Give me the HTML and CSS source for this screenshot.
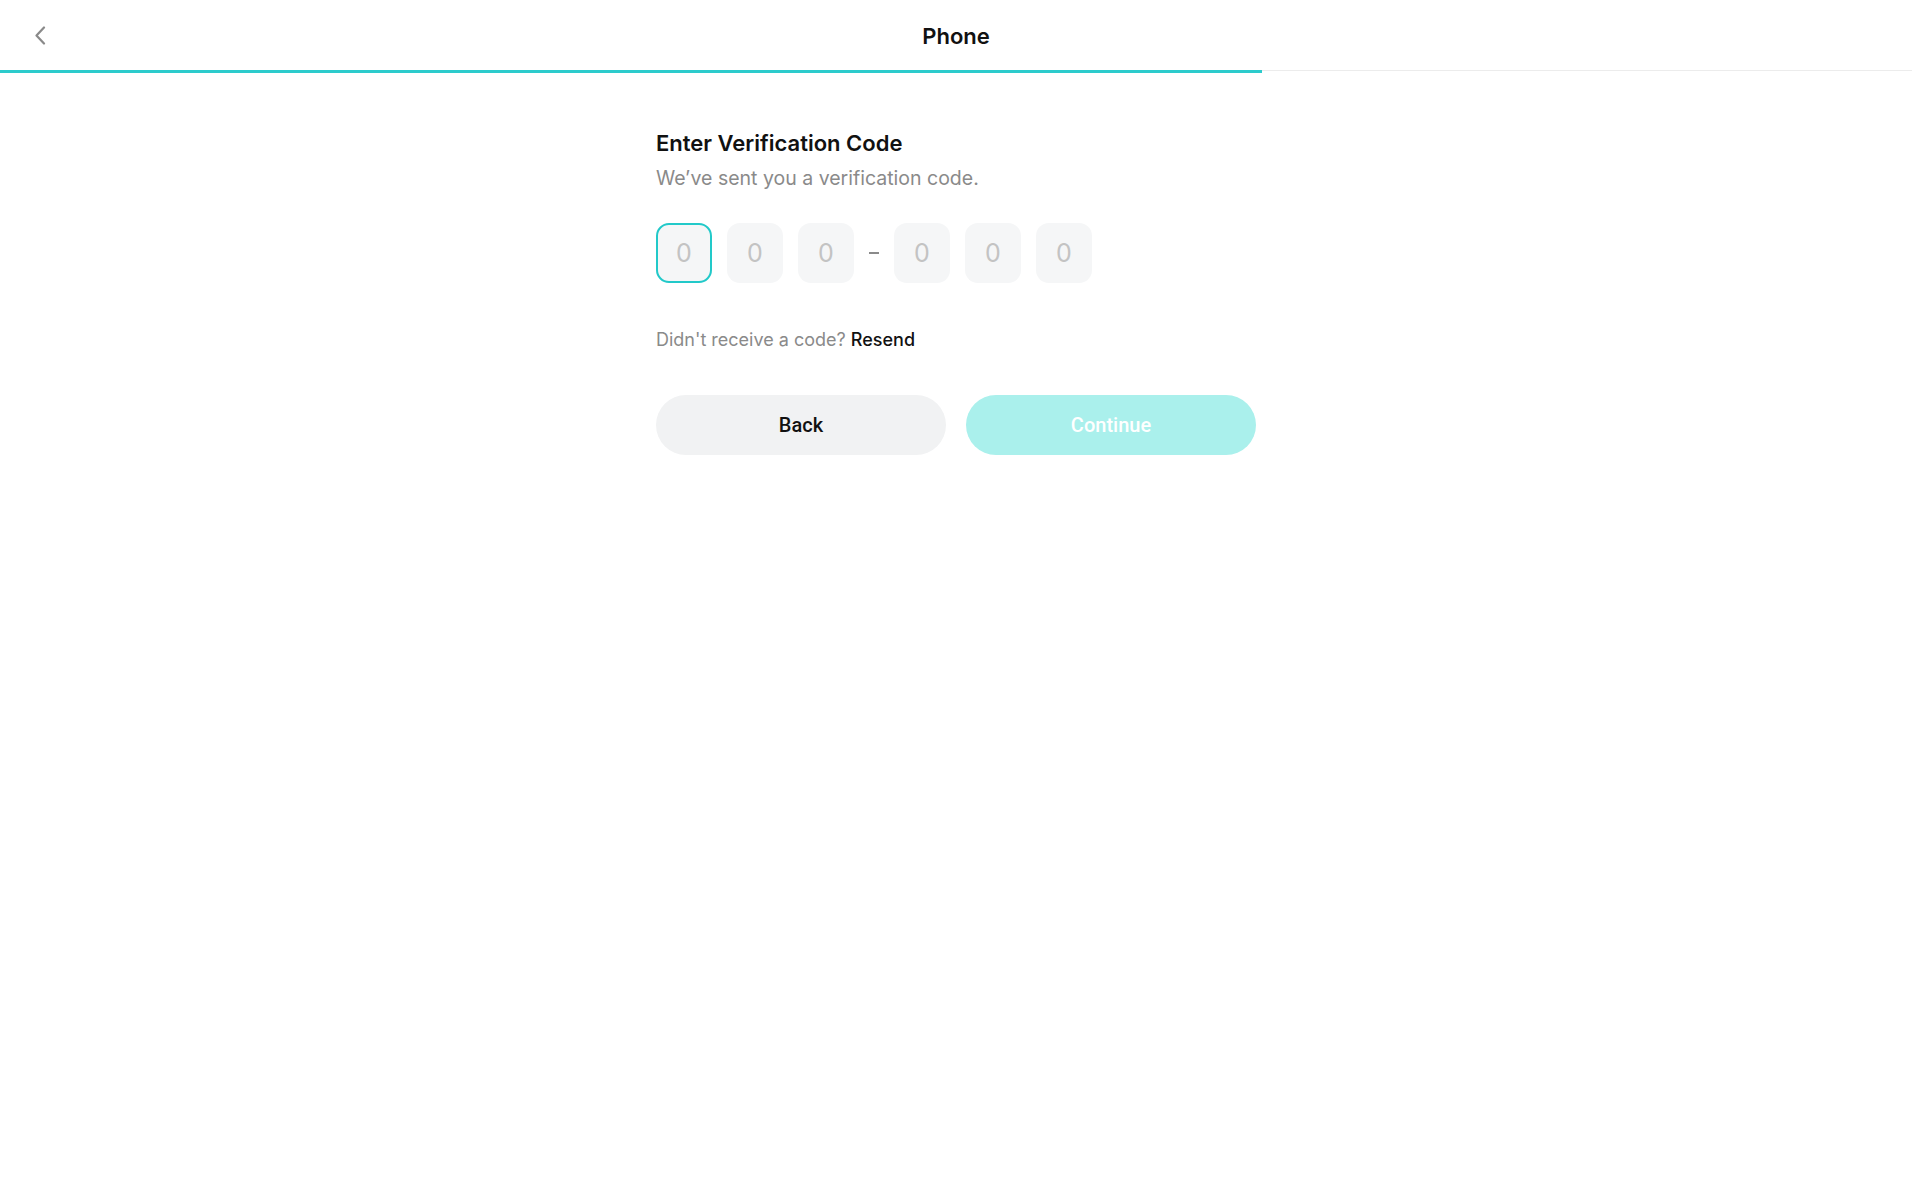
FILE: index.html
```html
<!DOCTYPE html>
<html lang="en">
<head>
<meta charset="utf-8">
<title>Phone</title>
<link rel="stylesheet" href="styles.css">
</head>
<body>
<div class="app">
  <header class="topbar">
    <button class="back-icon" aria-label="Back">
      <svg width="12" height="19" viewBox="0 0 12 19"><path d="M10 1.5 L2.5 9.5 L10 17.5" fill="none" stroke="#8a8a8a" stroke-width="2.2" stroke-linecap="round" stroke-linejoin="round"/></svg>
    </button>
    <h1 class="topbar-title">Phone</h1>
    <div class="progress"><div class="progress-fill"></div></div>
  </header>
  <main class="content">
    <h2 class="title">Enter Verification Code</h2>
    <p class="subtitle">We’ve sent you a verification code.</p>
    <div class="code-row">
      <div class="code-box active">0</div>
      <div class="code-box">0</div>
      <div class="code-box">0</div>
      <div class="dash"></div>
      <div class="code-box">0</div>
      <div class="code-box">0</div>
      <div class="code-box">0</div>
    </div>
    <p class="resend">Didn't receive a code? <span class="resend-link">Resend</span></p>
    <div class="actions">
      <button class="btn btn-back">Back</button>
      <button class="btn btn-continue">Continue</button>
    </div>
  </main>
</div>
</body>
</html>
```
FILE: styles.css
```css
* { box-sizing: border-box; }
html, body { margin: 0; padding: 0; background: #fff; }
body { font-family: Inter, "Noto Sans", sans-serif; color: #111; }
.app { width: 1912px; min-height: 1200px; }
.topbar {
  position: relative;
  height: 71px;
  display: flex;
  align-items: center;
  justify-content: center;
}
.back-icon {
  position: absolute;
  left: 30px;
  top: 24px;
  width: 20px;
  height: 22px;
  padding: 0;
  border: 0;
  background: none;
  display: flex;
  align-items: center;
  justify-content: center;
}
.topbar-title {
  margin: 0;
  font-size: 22px;
  font-weight: 600;
  color: #111;
}
.progress {
  position: absolute;
  left: 0;
  right: 0;
  bottom: 0;
  height: 1px;
  background: #ececec;
}
.progress-fill {
  position: absolute;
  left: 0;
  top: 0;
  width: 1262px;
  height: 3px;
  background: #2ccbcc;
}
.content {
  width: 600px;
  margin: 0 auto;
  padding-top: 58px;
}
.title {
  margin: 0;
  font-size: 22px;
  line-height: 28px;
  font-weight: 600;
  color: #111;
}
.subtitle {
  margin: 8px 0 0;
  font-size: 19.5px;
  line-height: 26px;
  color: #8a8a8a;
  font-weight: 400;
}
.code-row {
  display: flex;
  align-items: center;
  gap: 15px;
  margin-top: 32px;
}
.code-box {
  width: 56px;
  height: 60px;
  border-radius: 13px;
  background: #f5f6f7;
  display: flex;
  align-items: center;
  justify-content: center;
  font-size: 25px;
  color: #c3c3c3;
  font-weight: 400;
}
.code-box.active {
  border: 2px solid #22c9c9;
}
.dash {
  width: 10px;
  height: 2px;
  background: #8a8a8a;
}
.resend {
  margin: 46px 0 0;
  font-size: 18px;
  line-height: 22px;
  color: #8a8a8a;
}
.resend-link { color: #111; font-weight: 500; }
.actions {
  display: flex;
  gap: 20px;
  margin-top: 44px;
}
.btn {
  flex: 1;
  height: 60px;
  border: 0;
  border-radius: 30px;
  font-family: Roboto, Inter, sans-serif;
  font-size: 20px;
  font-weight: 500;
}
.btn-back { background: #f1f2f3; color: #111; }
.btn-continue { background: #aaf0ec; color: #fff; }
```
